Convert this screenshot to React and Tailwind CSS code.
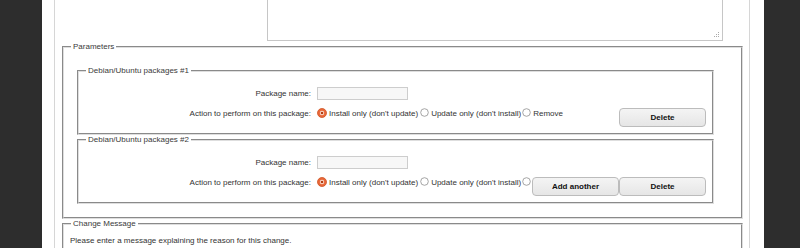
import React from 'react';

const Radio = ({ checked, className = '' }) =>
  checked ? (
    <svg width="10" height="10" viewBox="0 0 10 10" className={`shrink-0 ${className}`}>
      <circle cx="5" cy="5" r="4.5" fill="#e9683a" stroke="#cf5524" strokeWidth="0.8" />
      <circle cx="5" cy="5" r="2.2" fill="#fbe3d6" />
      <circle cx="5" cy="5" r="1.3" fill="#b53c10" />
    </svg>
  ) : (
    <svg width="9" height="9" viewBox="0 0 9 9" className={`shrink-0 ${className}`}>
      <circle cx="4.5" cy="4.5" r="3.8" fill="#fff" stroke="#8f8f8f" strokeWidth="0.8" />
    </svg>
  );

const Button = ({ children }) => (
  <button className="h-[19px] w-[87px] shrink-0 rounded-[4px] border border-[#bcbcbc] bg-gradient-to-b from-[#f4f4f4] to-[#e6e6e6] text-[8px] font-bold text-[#111]">
    {children}
  </button>
);

const PackageSet = ({ index, showRemove, extra }) => (
  <fieldset className="ml-[6px] min-w-0 border-2 border-[#dedede] [border-style:groove] pb-[6px] pl-[7px] pr-[6px]">
    <legend className="px-[2px] leading-[10px] text-[#3a3a3a]">Debian/Ubuntu packages #{index}</legend>
    <div className="grid grid-cols-[225px_minmax(0,1fr)] gap-x-[6px] gap-y-[8px] pt-[11px]">
      <div className="flex h-[13px] items-center justify-end">Package name:</div>
      <div className="h-[13px] w-[91px] border border-[#cdcdcd] bg-[#f7f7f7]" />
      <div className="flex h-[11px] items-end justify-end whitespace-nowrap leading-[10px]">Action to perform on this package:</div>
      <div className="flex min-w-0 items-start">
        <div className="flex min-w-0 items-start whitespace-nowrap leading-[10px]">
          <Radio checked className="mr-[2px]" />
          <span className="mt-px">Install only (don't update)</span>
          <Radio className="ml-[2px] mr-[2px]" />
          <span className="mt-px">Update only (don't install)</span>
          <Radio className="ml-px mr-[2px]" />
          {showRemove && <span className="mt-px">Remove</span>}
        </div>
        <div className="ml-auto flex shrink-0">
          {extra}
          <Button>Delete</Button>
        </div>
      </div>
    </div>
  </fieldset>
);

export default function App() {
  return (
    <div className="flex h-[248px] w-[800px] overflow-hidden bg-[#2d2d2d] font-['Liberation_Sans',Arial,sans-serif] text-[8px] text-[#333]">
      <div className="ml-[42px] w-[722px] bg-white pl-[12px] pr-[14px]">
        <div className="h-full border-x border-[#d6d6d6] pl-[7px] pr-[6px]">
          <div className="relative ml-[205px] h-[41px] w-[456px] border border-t-0 border-[#c6c6c6]">
            <svg width="6" height="6" viewBox="0 0 6 6" className="absolute bottom-[2px] right-[2px]">
              <rect x="4" y="0" width="1" height="1" fill="#aaa" />
              <rect x="2" y="2" width="1" height="1" fill="#aaa" />
              <rect x="4" y="2" width="1" height="1" fill="#aaa" />
              <rect x="0" y="4" width="1" height="1" fill="#aaa" />
              <rect x="2" y="4" width="1" height="1" fill="#aaa" />
              <rect x="4" y="4" width="1" height="1" fill="#aaa" />
            </svg>
          </div>

          <fieldset className="mt-px min-w-0 border-2 border-[#dedede] [border-style:groove] pb-[13px] pl-[7px] pr-[27px] pt-[14px]">
            <legend className="px-[2px] leading-[10px] text-[#3a3a3a]">Parameters</legend>
            <PackageSet index={1} showRemove />
            <PackageSet index={2} extra={<Button>Add another</Button>} />
          </fieldset>

          <fieldset className="h-[80px] min-w-0 border-2 border-[#dedede] [border-style:groove] pl-[7px] pt-[7px]">
            <legend className="px-[2px] leading-[10px] text-[#3a3a3a]">Change Message</legend>
            <p className="-ml-px leading-[10px]">Please enter a message explaining the reason for this change.</p>
          </fieldset>
        </div>
      </div>
    </div>
  );
}
